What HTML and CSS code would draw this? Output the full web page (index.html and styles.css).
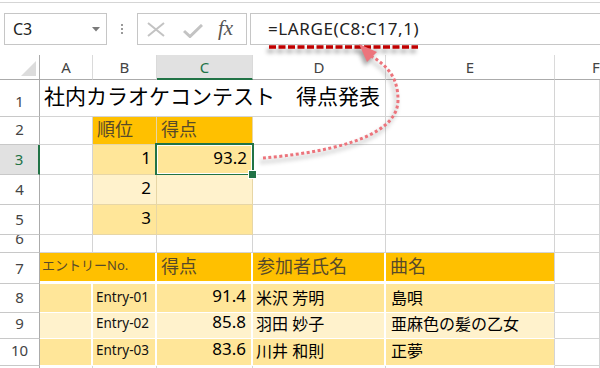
FILE: index.html
```html
<!DOCTYPE html>
<html lang="ja">
<head>
    <meta charset="UTF-8">
    <title>LARGE関数 - 得点発表</title>
    <link rel="stylesheet" href="styles.css">
</head>
<body>
    <div class="toolbar">
        <div class="namebox">
            <span>C3</span>
            <svg class="caret" width="8" height="5" viewBox="0 0 8 5"><polygon points="0,0 8,0 4,4.5" fill="#7a7a7a"/></svg>
        </div>
        <div class="grip"><i></i><i></i><i></i></div>
        <div class="fbtns">
            <svg width="18" height="15" viewBox="0 0 18 15"><path d="M1 1 L17 14 M17 1 L1 14" stroke="#c3c3c3" stroke-width="2" fill="none"/></svg>
            <svg width="20" height="14" viewBox="0 0 20 14"><path d="M1 7 L7 12.5 L19 1" stroke="#c3c3c3" stroke-width="3" fill="none"/></svg>
            <span class="fx">fx</span>
        </div>
        <div class="formula">=LARGE(C8:C17,1)</div>
    </div>

    <div class="sheet">
        <!-- column headers -->
        <div class="corner"><svg width="40" height="25" viewBox="0 0 40 25"><polygon points="36,6 36,21 21,21" fill="#dcdcdc"/></svg></div>
        <div class="ch">A</div>
        <div class="ch">B</div>
        <div class="ch sel">C</div>
        <div class="ch">D</div>
        <div class="ch">E</div>
        <div class="ch-edge"><span>F</span></div>

        <!-- row 1 -->
        <div class="rh">1</div>
        <div class="c title">社内カラオケコンテスト　得点発表</div>
        <div class="c"></div>
        <div class="c"></div>

        <!-- row 2 -->
        <div class="rh">2</div>
        <div class="c"></div>
        <div class="c top hd">順位</div>
        <div class="c top hd">得点</div>
        <div class="c"></div>
        <div class="c"></div>
        <div class="c"></div>

        <!-- row 3 -->
        <div class="rh sel">3</div>
        <div class="c"></div>
        <div class="c top lt num">1</div>
        <div class="c top lt num active">93.2</div>
        <div class="c"></div>
        <div class="c"></div>
        <div class="c"></div>

        <!-- row 4 -->
        <div class="rh">4</div>
        <div class="c"></div>
        <div class="c top lt2 num">2</div>
        <div class="c top lt2"></div>
        <div class="c"></div>
        <div class="c"></div>
        <div class="c"></div>

        <!-- row 5 -->
        <div class="rh">5</div>
        <div class="c"></div>
        <div class="c top lt num">3</div>
        <div class="c top lt"></div>
        <div class="c"></div>
        <div class="c"></div>
        <div class="c"></div>

        <!-- row 6 -->
        <div class="rh short">6</div>
        <div class="c"></div>
        <div class="c"></div>
        <div class="c"></div>
        <div class="c"></div>
        <div class="c"></div>
        <div class="c"></div>

        <!-- row 7 -->
        <div class="rh">7</div>
        <div class="c tbl hd thead entry">エントリーNo.</div>
        <div class="c tbl hd thead">得点</div>
        <div class="c tbl hd thead">参加者氏名</div>
        <div class="c tbl hd thead last">曲名</div>
        <div class="c"></div>

        <!-- row 8 -->
        <div class="rh">8</div>
        <div class="c tbl lt"></div>
        <div class="c tbl lt code">Entry-01</div>
        <div class="c tbl lt num">91.4</div>
        <div class="c tbl lt name">米沢 芳明</div>
        <div class="c tbl lt name last">島唄</div>
        <div class="c"></div>

        <!-- row 9 -->
        <div class="rh">9</div>
        <div class="c tbl lt2"></div>
        <div class="c tbl lt2 code">Entry-02</div>
        <div class="c tbl lt2 num">85.8</div>
        <div class="c tbl lt2 name">羽田 妙子</div>
        <div class="c tbl lt2 name last">亜麻色の髪の乙女</div>
        <div class="c"></div>

        <!-- row 10 -->
        <div class="rh">10</div>
        <div class="c tbl lt"></div>
        <div class="c tbl lt code">Entry-03</div>
        <div class="c tbl lt num">83.6</div>
        <div class="c tbl lt name">川井 和則</div>
        <div class="c tbl lt name last">正夢</div>
        <div class="c"></div>

        <!-- row 11 (only its top edge shows) -->
        <div class="rh"></div>
        <div class="c"></div>
        <div class="c"></div>
        <div class="c"></div>
        <div class="c"></div>
        <div class="c"></div>
        <div class="c"></div>
    </div>

    <!-- callout: C3 points at the formula -->
    <svg class="callout" width="600" height="368" viewBox="0 0 600 368">
        <g class="shade">
            <line x1="269" y1="47" x2="418" y2="47" stroke="#c00000" stroke-width="3.5" stroke-dasharray="7 2.5"/>
        </g>
        <g class="shade">
            <path d="M263 158 C 320 153 398 140 398 100 C 398 78 388 66 371 56" stroke="#ec747c" stroke-width="3" stroke-dasharray="3 2.5" fill="none"/>
            <polygon points="359,44 377,52 367,62" fill="#ec747c"/>
        </g>
    </svg>
</body>
</html>
```

FILE: styles.css
```css
* {
    margin: 0;
    padding: 0;
    box-sizing: border-box;
}

body {
    font-family: "Noto Sans", "Noto Sans CJK JP", sans-serif;
    background: white;
    color: #000;
    width: 600px;
    height: 368px;
    overflow: hidden;
    position: relative;
}

/* formula bar */
.toolbar {
    margin-top: 2px;
    border-top: 1px solid #d5d5d5;
    height: 53px;
    display: flex;
    align-items: flex-start;
    padding: 10px 0 0 4px;
}

.namebox {
    width: 103px;
    height: 32px;
    border: 1px solid #c6c6c6;
    display: flex;
    align-items: center;
    justify-content: space-between;
    padding: 0 6px 0 8px;
    font-size: 16px;
    color: #222;
}

.caret {
    margin-top: 1px;
}

.grip {
    width: 30px;
    height: 32px;
    display: flex;
    flex-direction: column;
    align-items: center;
    justify-content: center;
    gap: 2px;
}

.grip i {
    width: 2px;
    height: 2px;
    background: #9a9a9a;
}

.fbtns {
    width: 110px;
    height: 32px;
    border: 1px solid #c6c6c6;
    display: flex;
    align-items: center;
    padding-left: 9px;
    gap: 17px;
}

.fbtns svg:nth-child(2) {
    margin-left: 1px;
    margin-top: 3px;
}

.fx {
    font-family: "Liberation Serif", serif;
    font-style: italic;
    font-size: 21px;
    color: #555;
    margin-left: -2px;
    margin-top: -2px;
}

.formula {
    flex: 1;
    height: 32px;
    margin-left: 3px;
    border: 1px solid #c6c6c6;
    border-right: none;
    padding: 2px 0 0 17px;
    font-size: 17px;
    letter-spacing: 0.6px;
    line-height: 26px;
    color: #222;
}

/* sheet grid */
.sheet {
    display: grid;
    grid-template-columns: 40px 53px 64px 96px 133px 169px 45px;
    grid-template-rows: 25px 37px 28px 30px 30px 30px 18px 31px 29px 26px 27px 20px;
}

.corner {
    border-right: 1px solid #ababab;
    border-bottom: 1px solid #ababab;
}

.corner svg {
    display: block;
}

.ch {
    border-right: 1px solid #dadada;
    border-bottom: 1px solid #ababab;
    display: flex;
    align-items: center;
    justify-content: center;
    font-size: 15px;
    color: #444;
}

/* column F is wider than the window: only the edge of its letter shows */
.ch-edge {
    border-bottom: 1px solid #ababab;
    font-size: 15px;
    line-height: 24px;
    color: #444;
    overflow: hidden;
    white-space: nowrap;
}

.ch-edge span {
    display: inline-block;
    margin-left: 37px;
}

.ch.sel {
    background: #e1e1e1;
    color: #217346;
    border-bottom: 2px solid #217346;
}

.rh {
    border-right: 1px solid #ababab;
    border-bottom: 1px solid #c8c8c8;
    display: flex;
    align-items: flex-end;
    justify-content: center;
    font-size: 15px;
    line-height: 1;
    padding-bottom: 7px;
    color: #444;
    overflow: hidden;
}

.rh.sel {
    background: #e1e1e1;
    color: #217346;
    border-right: 2px solid #217346;
}

.rh.short {
    padding-bottom: 6px;
}

.c {
    border-right: 1px solid #d4d4d4;
    border-bottom: 1px solid #d4d4d4;
    display: flex;
    align-items: flex-end;
    padding: 0 4px 6px;
    font-size: 16px;
    line-height: 1;
    white-space: nowrap;
    position: relative;
}

.title {
    grid-column: span 4;
    font-size: 21px;
    padding-bottom: 9px;
}

.hd {
    background: #ffc000;
    color: #574a2a;
    font-size: 18px;
}

.lt {
    background: #ffe699;
}

.lt2 {
    background: #fff2cc;
}

.top {
    border-color: #e7d6a6;
}

.num {
    justify-content: flex-end;
    font-size: 17px;
    padding-right: 5px;
    padding-bottom: 8px;
}

/* selected cell */
.active::after {
    content: "";
    position: absolute;
    top: -2px;
    left: -2px;
    right: -2px;
    bottom: -2px;
    border: 2px solid #217346;
    box-shadow: inset 0 0 0 1px #fff;
}

.active::before {
    content: "";
    position: absolute;
    right: -5px;
    bottom: -5px;
    width: 7px;
    height: 7px;
    background: #217346;
    border: 1px solid #fff;
    z-index: 2;
}

/* entry table */
.tbl {
    border-right: 2px solid #fff;
    border-bottom: 1px solid #fff;
    padding-left: 3px;
}

.tbl.last {
    border-right: 1px solid #d4d4d4;
}

.thead {
    border-bottom: 3px solid #fff;
    padding-left: 4px;
}

.entry {
    grid-column: span 2;
    font-size: 13px;
    padding-left: 2px;
    padding-bottom: 9px;
}

.code {
    font-size: 13.5px;
    color: #111;
    padding-bottom: 8px;
}

.name {
    font-size: 16px;
    padding-bottom: 6px;
}

.name.last {
    padding-left: 5px;
}

/* callout arrow */
.callout {
    position: absolute;
    top: 0;
    left: 0;
    pointer-events: none;
}

.shade {
    filter: drop-shadow(-2px 4px 2px rgba(0, 0, 0, 0.35));
}
```
